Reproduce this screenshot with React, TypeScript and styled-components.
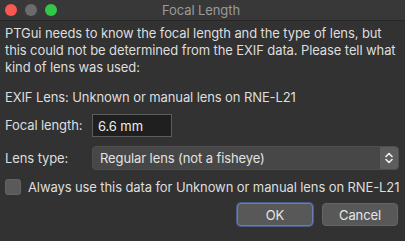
import styled, { createGlobalStyle } from 'styled-components';

const GlobalStyle = createGlobalStyle`
  html, body {
    margin: 0;
    padding: 0;
    background: #323232;
  }
  body {
    font-family: Inter, "Noto Sans", sans-serif;
    font-size: 13px;
    letter-spacing: -0.1px;
    color: #dedede;
    -webkit-font-smoothing: antialiased;
  }
`;

const Window = styled.div`
  width: 405px;
  height: 241px;
  background: #323232;
  display: flex;
  flex-direction: column;
  overflow: hidden;
`;

const TitleBar = styled.div`
  height: 21px;
  display: flex;
  align-items: center;
  background: #383838;
  border-bottom: 1px solid #262626;
  box-sizing: border-box;
`;

const Lights = styled.div`
  display: flex;
  gap: 8px;
  padding-left: 5px;
`;

const Light = styled.span<{ $color: string }>`
  width: 12px;
  height: 12px;
  border-radius: 50%;
  background: ${(p) => p.$color};
`;

const Title = styled.div`
  flex: 1;
  text-align: center;
  margin-left: -60px;
  color: #9a9a9a;
  font-size: 13px;
`;

const Body = styled.div`
  padding: 4px 4px 0 5px;
  display: flex;
  flex-direction: column;
  white-space: nowrap;
`;

const Message = styled.p`
  margin: 0;
  line-height: 17px;
`;

const ExifLine = styled.p`
  margin: 13px 0 0;
  line-height: 17px;
`;

const FormGrid = styled.div`
  display: grid;
  grid-template-columns: 87px 1fr;
  row-gap: 9px;
  align-items: center;
  margin-top: 8px;
  padding-right: 2px;
`;

const Label = styled.span`
  line-height: 17px;
`;

const TextInput = styled.div`
  width: 80px;
  height: 23px;
  box-sizing: border-box;
  background: #1f1f1f;
  border: 1px solid #5c5c5c;
  padding: 0 5px;
  display: flex;
  align-items: center;
  color: #ececec;
`;

const Select = styled.div`
  height: 24px;
  box-sizing: border-box;
  border: 1px solid #4e4e4e;
  border-radius: 4px;
  background: #474747;
  display: flex;
  align-items: stretch;
  overflow: hidden;
`;

const SelectValue = styled.span`
  flex: 1;
  display: flex;
  align-items: center;
  padding-left: 7px;
  color: #e2e2e2;
`;

const SelectArrow = styled.span`
  width: 18px;
  background: #5d5d5d;
  display: flex;
  align-items: center;
  justify-content: center;
`;

const CheckRow = styled.label`
  display: flex;
  align-items: center;
  gap: 7px;
  margin-top: 9px;
`;

const CheckBox = styled.span`
  width: 16px;
  height: 16px;
  box-sizing: border-box;
  border-radius: 3px;
  background: #5a5a5a;
  border: 1px solid #646464;
  flex-shrink: 0;
`;

const Buttons = styled.div`
  display: flex;
  justify-content: flex-end;
  gap: 9px;
  margin-top: 8px;
  padding-right: 3px;
`;

const Button = styled.button<{ $focused?: boolean }>`
  width: 76px;
  height: 23px;
  box-sizing: border-box;
  border-radius: 4px;
  font-family: inherit;
  font-size: 13px;
  letter-spacing: inherit;
  color: #e6e6e6;
  background: #585858;
  border: 1px solid ${(p) => (p.$focused ? '#6b7db4' : '#656565')};
  box-shadow: ${(p) => (p.$focused ? '0 0 0 1px #4a5a8a' : 'none')};
  padding: 0;
`;

export default function App() {
  return (
    <Window>
      <GlobalStyle />
      <TitleBar>
        <Lights>
          <Light $color="#fc5753" />
          <Light $color="#6b6b6b" />
          <Light $color="#33c748" />
        </Lights>
        <Title>Focal Length</Title>
      </TitleBar>
      <Body>
        <Message>
          PTGui needs to know the focal length and the type of lens, but
          <br />
          this could not be determined from the EXIF data. Please tell what
          <br />
          kind of lens was used:
        </Message>
        <ExifLine>EXIF Lens: Unknown or manual lens on RNE-L21</ExifLine>
        <FormGrid>
          <Label>Focal length:</Label>
          <TextInput>6.6 mm</TextInput>
          <Label>Lens type:</Label>
          <Select>
            <SelectValue>Regular lens (not a fisheye)</SelectValue>
            <SelectArrow>
              <svg width="8" height="12" viewBox="0 0 8 12" fill="none" stroke="#f0f0f0" strokeWidth="1.6" strokeLinecap="round" strokeLinejoin="round">
                <path d="M1 4.5 L4 1.5 L7 4.5" />
                <path d="M1 7.5 L4 10.5 L7 7.5" />
              </svg>
            </SelectArrow>
          </Select>
        </FormGrid>
        <CheckRow>
          <CheckBox />
          <span>Always use this data for Unknown or manual lens on RNE-L21</span>
        </CheckRow>
        <Buttons>
          <Button $focused>OK</Button>
          <Button>Cancel</Button>
        </Buttons>
      </Body>
    </Window>
  );
}
